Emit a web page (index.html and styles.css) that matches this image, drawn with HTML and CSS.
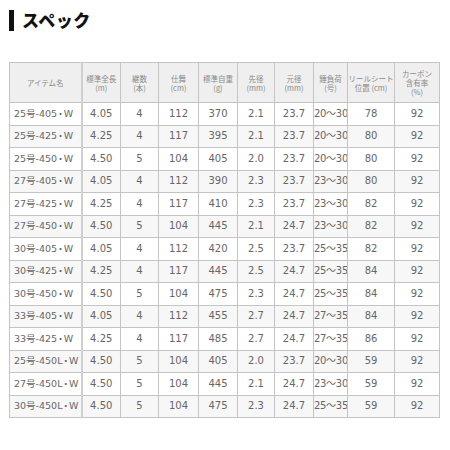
FILE: index.html
```html
<!DOCTYPE html>
<html lang="ja">
<head>
<meta charset="utf-8">
<link rel="stylesheet" href="styles.css">
</head>
<body>
<div class="page">
  <h2 class="title"><span class="bar"></span>スペック</h2>
  <table class="spec">
    <colgroup>
      <col class="c1"><col class="c2"><col class="c3"><col class="c4"><col class="c5">
      <col class="c6"><col class="c7"><col class="c8"><col class="c9"><col class="c10">
    </colgroup>
    <thead>
      <tr>
        <th class="first">アイテム名</th>
        <th>標準全長<br>(m)</th>
        <th>継数<br>(本)</th>
        <th>仕舞<br>(cm)</th>
        <th>標準自重<br>(g)</th>
        <th>先径<br>(mm)</th>
        <th>元径<br>(mm)</th>
        <th>錘負荷<br>(号)</th>
        <th>リールシート<br>位置 (cm)</th>
        <th>カーボン<br>含有率<br>(%)</th>
      </tr>
    </thead>
    <tbody>
      <tr><td class="first">25号-405<span class="dot">・</span>W</td><td>4.05</td><td>4</td><td>112</td><td>370</td><td>2.1</td><td>23.7</td><td class="load">20～30</td><td>78</td><td>92</td></tr>
      <tr><td class="first">25号-425<span class="dot">・</span>W</td><td>4.25</td><td>4</td><td>117</td><td>395</td><td>2.1</td><td>23.7</td><td class="load">20～30</td><td>80</td><td>92</td></tr>
      <tr><td class="first">25号-450<span class="dot">・</span>W</td><td>4.50</td><td>5</td><td>104</td><td>405</td><td>2.0</td><td>23.7</td><td class="load">20～30</td><td>80</td><td>92</td></tr>
      <tr><td class="first">27号-405<span class="dot">・</span>W</td><td>4.05</td><td>4</td><td>112</td><td>390</td><td>2.3</td><td>23.7</td><td class="load">23～30</td><td>80</td><td>92</td></tr>
      <tr><td class="first">27号-425<span class="dot">・</span>W</td><td>4.25</td><td>4</td><td>117</td><td>410</td><td>2.3</td><td>23.7</td><td class="load">23～30</td><td>82</td><td>92</td></tr>
      <tr><td class="first">27号-450<span class="dot">・</span>W</td><td>4.50</td><td>5</td><td>104</td><td>445</td><td>2.1</td><td>24.7</td><td class="load">23～30</td><td>82</td><td>92</td></tr>
      <tr><td class="first">30号-405<span class="dot">・</span>W</td><td>4.05</td><td>4</td><td>112</td><td>420</td><td>2.5</td><td>23.7</td><td class="load">25～35</td><td>82</td><td>92</td></tr>
      <tr><td class="first">30号-425<span class="dot">・</span>W</td><td>4.25</td><td>4</td><td>117</td><td>445</td><td>2.5</td><td>24.7</td><td class="load">25～35</td><td>84</td><td>92</td></tr>
      <tr><td class="first">30号-450<span class="dot">・</span>W</td><td>4.50</td><td>5</td><td>104</td><td>475</td><td>2.3</td><td>24.7</td><td class="load">25～35</td><td>84</td><td>92</td></tr>
      <tr><td class="first">33号-405<span class="dot">・</span>W</td><td>4.05</td><td>4</td><td>112</td><td>455</td><td>2.7</td><td>24.7</td><td class="load">27～35</td><td>84</td><td>92</td></tr>
      <tr><td class="first">33号-425<span class="dot">・</span>W</td><td>4.25</td><td>4</td><td>117</td><td>485</td><td>2.7</td><td>24.7</td><td class="load">27～35</td><td>86</td><td>92</td></tr>
      <tr><td class="first">25号-450L<span class="dot">・</span>W</td><td>4.50</td><td>5</td><td>104</td><td>405</td><td>2.0</td><td>23.7</td><td class="load">20～30</td><td>59</td><td>92</td></tr>
      <tr><td class="first">27号-450L<span class="dot">・</span>W</td><td>4.50</td><td>5</td><td>104</td><td>445</td><td>2.1</td><td>24.7</td><td class="load">23～30</td><td>59</td><td>92</td></tr>
      <tr><td class="first">30号-450L<span class="dot">・</span>W</td><td>4.50</td><td>5</td><td>104</td><td>475</td><td>2.3</td><td>24.7</td><td class="load">25～35</td><td>59</td><td>92</td></tr>
    </tbody>
  </table>
</div>
</body>
</html>
```
FILE: styles.css
```css
html, body {
  margin: 0;
  padding: 0;
  background: #ffffff;
}
.page {
  padding: 9px 0 0 9px;
  font-family: "DejaVu Sans", "Noto Sans CJK JP", sans-serif;
}
.title {
  display: flex;
  align-items: center;
  gap: 8px;
  margin: 0;
  height: 22px;
  font-family: "Noto Sans CJK JP", sans-serif;
  font-size: 17px;
  font-weight: 900;
  color: #111;
  line-height: 22px;
  letter-spacing: 0.5px;
}
.bar {
  display: block;
  width: 5px;
  height: 21px;
  background: #111;
}
.spec {
  margin-top: 31px;
  border-collapse: collapse;
  table-layout: fixed;
  width: 430px;
}
.c1 { width: 72px; }
.c2 { width: 39px; }
.c3 { width: 38px; }
.c4 { width: 40px; }
.c5 { width: 39px; }
.c6 { width: 37px; }
.c7 { width: 39px; }
.c8 { width: 34px; }
.c9 { width: 47px; }
.c10 { width: 45px; }
.spec th, .spec td {
  border: 1px solid #c4c4c4;
  padding: 0;
  text-align: center;
  white-space: nowrap;
}
.spec th {
  height: 39px;
  background: #efefef;
  color: #8a8a8a;
  font-family: "Noto Sans CJK JP", sans-serif;
  font-weight: 400;
  font-size: 7.5px;
  line-height: 9px;
}
.spec td {
  height: 21.5px;
  color: #666;
  font-size: 10px;
  line-height: 12px;
}
.spec tbody tr:nth-child(even) td {
  background: #f7f7f7;
}
.spec td.first {
  text-align: left;
  padding-left: 4px;
  font-size: 9.5px;
  letter-spacing: 0;
}
.spec td.first .dot {
  margin: 0 -1.5px;
}
.spec .first {
  border-right: 2px solid #cfcfcf;
}
.spec td.load {
  text-align: left;
  overflow: hidden;
  text-overflow: clip;
  letter-spacing: -0.3px;
}
```
